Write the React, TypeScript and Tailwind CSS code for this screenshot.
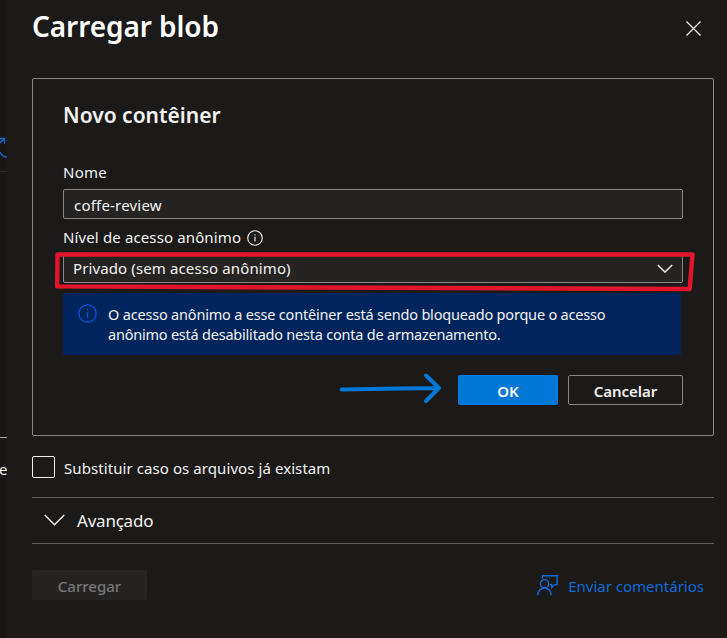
import type { ReactNode } from "react";

function Text({ className, children }: { className: string; children: ReactNode }) {
  return <span className={`block whitespace-nowrap ${className}`}>{children}</span>;
}

function InfoIcon({ className }: { className: string }) {
  return (
    <svg viewBox="0 0 20 20" fill="none" stroke="currentColor" className={className}>
      <circle cx="10" cy="10" r="9.1" strokeWidth="1.4" />
      <path d="M10 8.5v6" strokeWidth="1.4" />
      <path d="M10 5.3v1.5" strokeWidth="1.4" />
    </svg>
  );
}

function PageEdge() {
  return (
    <div className="flex w-[7px] shrink-0 flex-col overflow-hidden bg-[#181716]">
      <svg className="mt-[136px] h-6 w-[7px] text-[#0a6bd0]" viewBox="0 0 7 24" fill="none" stroke="currentColor">
        <path d="M0 2.5h4.5v5M4.5 2.5L0 7M0 16c1.5 3 4 5 7 5" strokeWidth="1.4" />
      </svg>
      <div className="mt-[11px] h-px w-full bg-[#32302f]" />
      <div className="mt-[265px] h-px w-full bg-[#a3a2a0]" />
      <span className="mt-[21px] -ml-px text-[15px] leading-5">e</span>
    </div>
  );
}

function NewContainer() {
  return (
    <section className="relative flex h-[358px] w-[682px] flex-col rounded-[2px] border border-[#8a8886] px-[30px]">
      <h2 className="mt-[22px] h-7 text-[21px] leading-7 font-semibold">
        <Text className="tracking-[0px]">Novo contêiner</Text>
      </h2>
      <label className="mt-[33px] h-5">
        <Text className="tracking-[0.25px]">Nome</Text>
      </label>
      <div className="mt-[7px] flex h-[30px] items-center rounded-[2px] border border-[#8a8886] bg-[#252423] pt-[2px] pl-[10px]">
        <Text className="tracking-[0.2px]">coffe-review</Text>
      </div>
      <div className="mt-2 flex h-5 items-center gap-[6px]">
        <Text className="w-[178px] tracking-[0.13px]">Nível de acesso anônimo</Text>
        <InfoIcon className="mt-[2px] h-4 w-4" />
      </div>
      <div className="mt-[6px] flex h-[30px] items-center justify-between rounded-[2px] border border-[#8a8886] bg-[#252423] pr-[9px] pl-[10px]">
        <Text className="-ml-px tracking-[0.12px]">Privado (sem acesso anônimo)</Text>
        <svg className="h-[9px] w-4" viewBox="0 0 16 9" fill="none" stroke="currentColor" strokeWidth="1.4">
          <path d="M.8 1L8 8.1 15.2 1" />
        </svg>
      </div>
      <div className="mt-[10px] flex h-[62px] w-[618px] gap-[11px] bg-[#00245c] pt-[11px] pl-[15px]">
        <InfoIcon className="h-[19px] w-[19px] text-[#0a53d8]" />
        <p className="text-[14.5px] leading-5">
          <Text className="tracking-[-0.19px]">O acesso anônimo a esse contêiner está sendo bloqueado porque o acesso</Text>
          <Text className="tracking-[-0.22px]">anônimo está desabilitado nesta conta de armazenamento.</Text>
        </p>
      </div>
      <div className="mt-5 flex justify-end gap-[10px] font-semibold">
        <svg className="mt-[-4px] mr-[6px] h-[36px] w-[104px]" viewBox="0 0 104 36" fill="none" stroke="#0078d7" strokeWidth="4" strokeLinecap="round" strokeLinejoin="round">
          <path d="M3.6 18.4C35 18 68 17.5 100 17M88 4.5L101 17 88 30" />
        </svg>
        <button className="flex h-[30px] w-[100px] items-center justify-center rounded-[2px] bg-[#0078d7] pt-[2px] text-white">
          <Text className="tracking-[0px]">OK</Text>
        </button>
        <button className="flex h-[30px] w-[115px] items-center justify-center rounded-[2px] border border-[#8a8886] pt-[2px]">
          <Text className="tracking-[-0.05px]">Cancelar</Text>
        </button>
      </div>
      <svg className="pointer-events-none absolute top-[170px] left-[20px] h-[46px] w-[644px]" viewBox="0 0 644 46" fill="none" stroke="#e3152c" strokeWidth="4.4" strokeLinejoin="round">
        <path d="M4.5 5.5L639.5 5.5 636.7 40 4.2 37.4Z" />
      </svg>
    </section>
  );
}

export default function App() {
  return (
    <div className="flex h-[638px] w-[727px] overflow-hidden bg-[#1b1a19] font-['Noto_Sans','Open_Sans',sans-serif] text-[15px] leading-5 text-[#f3f2f1]">
      <PageEdge />
      <main className="flex flex-1 flex-col pr-[13px] pl-[25px]">
        <header className="flex h-[78px] justify-between">
          <h1 className="mt-[8px] h-9 text-[28px] leading-9 font-semibold text-white">
            <Text className="tracking-[-0.08px]">Carregar blob</Text>
          </h1>
          <svg className="mt-[21px] mr-[13px] h-[15px] w-[15px]" viewBox="0 0 15 15" fill="none" stroke="currentColor" strokeWidth="1.3">
            <path d="M.5 .5l14 14M14.5 .5l-14 14" />
          </svg>
        </header>
        <NewContainer />
        <label className="mt-5 flex h-[22px] items-center gap-[9px]">
          <span className="h-[22px] w-[23px] rounded-[2px] border border-[#f3f2f1]" />
          <Text className="pt-px tracking-[0.08px]">Substituir caso os arquivos já existam</Text>
        </label>
        <div className="mt-[19px] flex h-[47px] items-center border-y border-[#605e5c] pl-3">
          <svg className="mr-[12px] mb-[2px] h-[12px] w-[21px]" viewBox="0 0 21 12" fill="none" stroke="currentColor" strokeWidth="1.4">
            <path d="M.8 1L10.5 10.7 20.2 1" />
          </svg>
          <Text className="pt-px text-[17px] tracking-[-0.22px]">Avançado</Text>
        </div>
        <footer className="mt-[26px] flex h-[30px] justify-between pr-[10px]">
          <button className="flex w-[115px] items-center justify-center rounded-[2px] bg-[#252423] pt-[2px] font-medium text-[#797775]">
            <Text className="tracking-[0px]">Carregar</Text>
          </button>
          <a className="flex gap-[10px] text-[#0f6cd8]">
            <svg className="mt-[4px] h-[22px] w-[21px]" viewBox="0 0 21 22" fill="none" stroke="currentColor" strokeWidth="1.4">
              <path d="M5.5 4.5V1.7h14.6v8.9h-2.3l-3 3v-3h-2" />
              <circle cx="7.5" cy="9.7" r="4.1" />
              <path d="M.8 21.3c0-4.4 3-7.3 6.7-7.3s6.7 2.9 6.7 7.3" />
            </svg>
            <Text className="mt-[6px] tracking-[0px]">Enviar comentários</Text>
          </a>
        </footer>
      </main>
    </div>
  );
}
